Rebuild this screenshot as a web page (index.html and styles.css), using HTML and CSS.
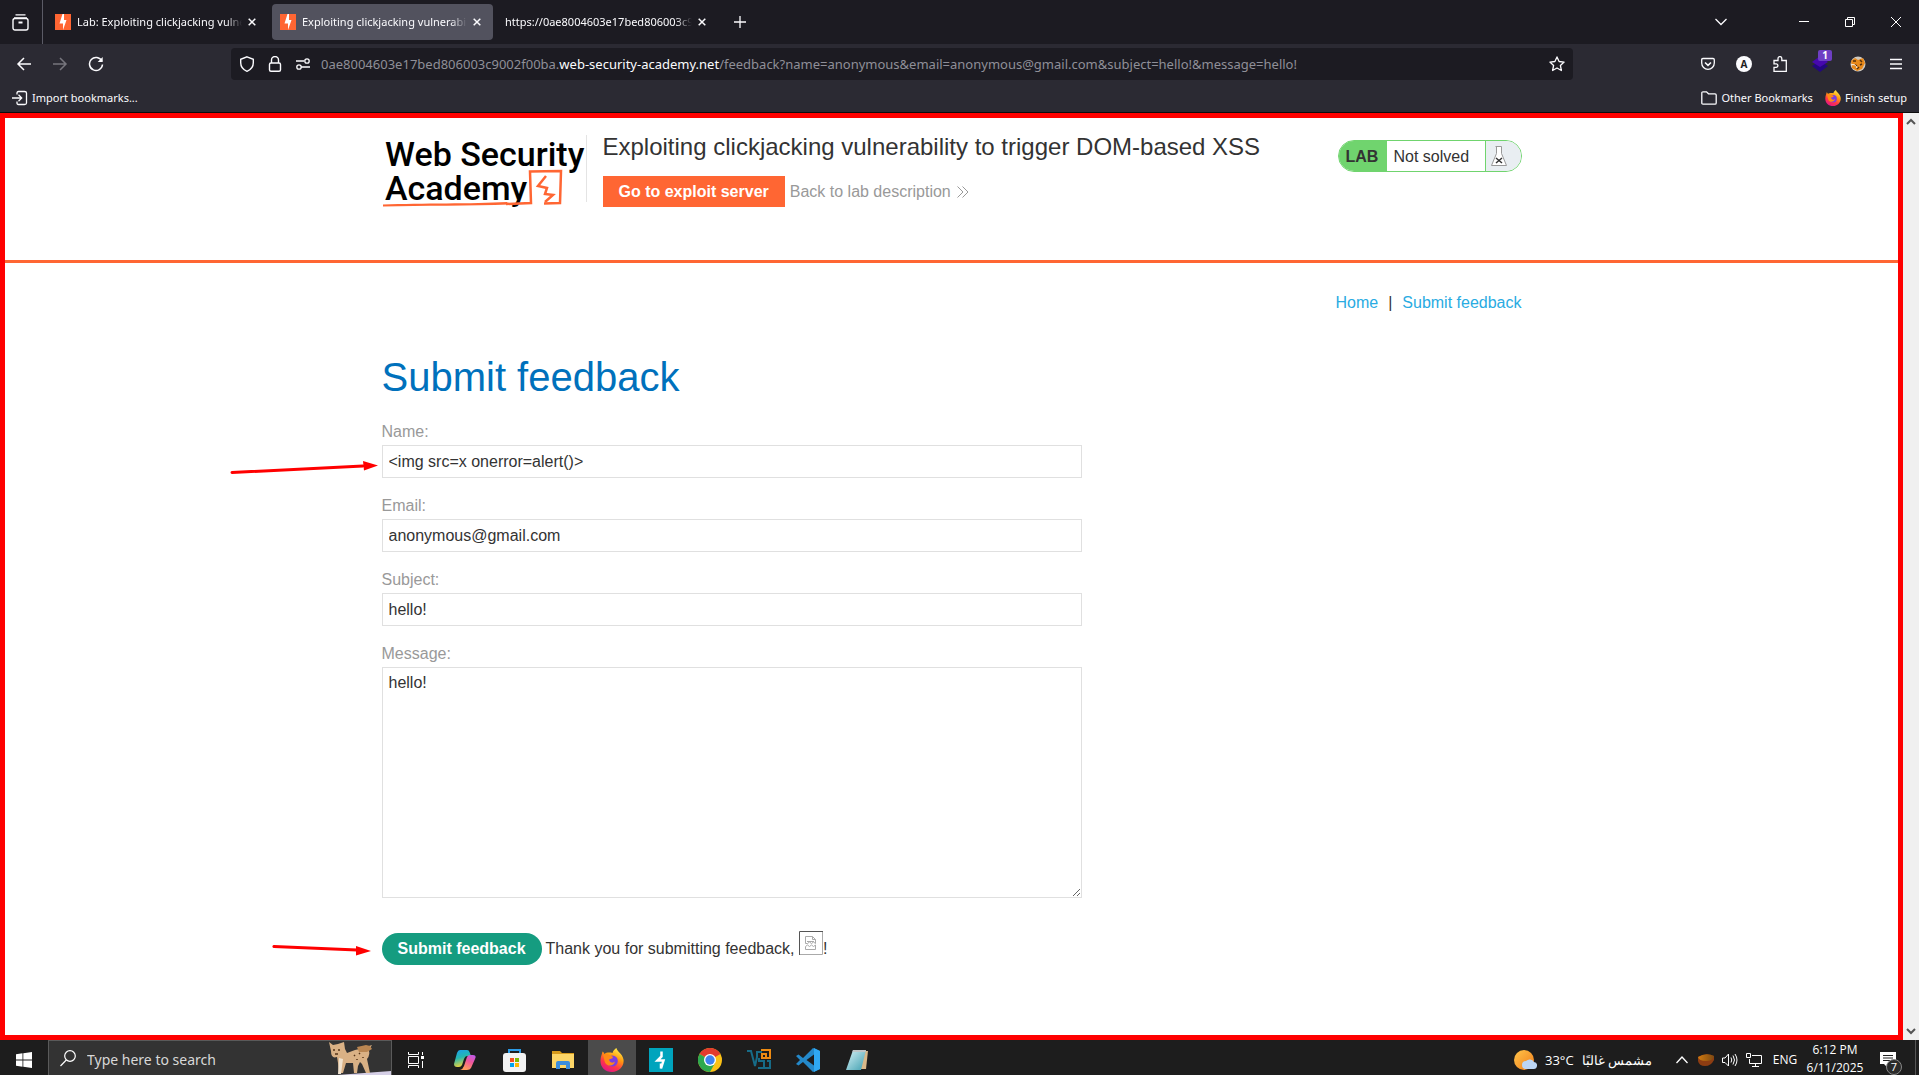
FILE: index.html
```html
<!DOCTYPE html>
<html lang="en">
<head>
<meta charset="utf-8">
<title>Exploiting clickjacking vulnerability to trigger DOM-based XSS</title>
<link rel="stylesheet" href="styles.css">
</head>
<body>
<svg class="defs" aria-hidden="true">
  <defs>
    <linearGradient id="flame" x1="0.8" y1="0" x2="0.3" y2="1"><stop offset="0" stop-color="#fff44f"/><stop offset=".4" stop-color="#ff980e"/><stop offset=".7" stop-color="#ff3647"/><stop offset="1" stop-color="#e31587"/></linearGradient>
    <linearGradient id="copA" x1="0" y1="0" x2="0.3" y2="1"><stop offset="0" stop-color="#1b9df0"/><stop offset=".5" stop-color="#25b7b0"/><stop offset="1" stop-color="#e8d13c"/></linearGradient>
    <linearGradient id="copB" x1="1" y1="0" x2="0.5" y2="1"><stop offset="0" stop-color="#b65cf5"/><stop offset=".5" stop-color="#f0569c"/><stop offset="1" stop-color="#ff9a5c"/></linearGradient>
    <linearGradient id="sun" x1="0" y1="0" x2="1" y2="1"><stop offset="0" stop-color="#ffc44a"/><stop offset="1" stop-color="#f07d1a"/></linearGradient>
    <linearGradient id="pad" x1="0" y1="0" x2="1" y2="1"><stop offset="0" stop-color="#d8f3f7"/><stop offset="1" stop-color="#3f9fb0"/></linearGradient>
    <linearGradient id="bowl" x1="0" y1="0" x2="1" y2="0"><stop offset="0" stop-color="#d07a10"/><stop offset="1" stop-color="#7d4a12"/></linearGradient>
    <symbol id="burp" viewBox="0 0 16 16"><rect width="16" height="16" fill="#f63"/><path d="M9 0v6h2.500L8 16V9.500H4.500L7.500 0z" fill="#fff"/></symbol>
    <symbol id="firefox" viewBox="0 0 24 24"><path d="M12.500 5C13 2.500 15 1 16.500 0c0 3 6 5.500 7 11.500C24.500 18 19 24 12 24S0 19 .5 12C.700 8.500 2 6.500 2.500 3.500 3.500 4 4 5 4.500 6 6 4.500 9.500 4.300 12.500 5z" fill="url(#flame)"/><circle cx="12.300" cy="13" r="5.500" fill="#7a3fe0"/><path d="M3 7c3.500-2 6 .5 9.500 1.500 1 1.500-.5 2.500-3 2.500-1 3 3 5 5.500 2.500-1 5-8 5.500-10 1C4 12 4 9 3 7z" fill="#ff8a16"/></symbol>
    <symbol id="close" viewBox="0 0 8 8"><path d="M.7.7l6.600 6.600M7.300.7L.7 7.300" fill="none" stroke="#fbfbfe" stroke-width="1.500"/></symbol>
  </defs>
</svg>

<header class="browser">
  <div class="tabstrip">
    <button class="view" aria-label="Firefox View"><svg width="17" height="17" viewBox="0 0 17 17" fill="none" stroke="#fbfbfe" stroke-width="1.400"><path d="M3.500.9h10M2 3.900h13"/><rect x="1" y="4.500" width="15" height="11.500" rx="2"/><path d="M6.500 8.500h4" stroke-width="2"/></svg></button>
    <nav class="tabs" aria-label="Tabs">
      <div class="tab"><svg width="16" height="16"><use href="#burp"/></svg><span class="tab-title">Lab: Exploiting clickjacking vulnerability</span><button aria-label="Close tab"><svg width="8" height="8"><use href="#close"/></svg></button></div>
      <div class="tab active"><svg width="16" height="16"><use href="#burp"/></svg><span class="tab-title">Exploiting clickjacking vulnerability</span><button aria-label="Close tab"><svg width="8" height="8"><use href="#close"/></svg></button></div>
      <div class="tab"><span class="tab-title">https://0ae8004603e17bed806003c9002f00ba</span><button aria-label="Close tab"><svg width="8" height="8"><use href="#close"/></svg></button></div>
    </nav>
    <button class="newtab" aria-label="New tab"><svg width="12" height="12" viewBox="0 0 12 12" stroke="#fbfbfe" stroke-width="1.300"><path d="M6 0v12M0 6h12"/></svg></button>
    <div class="window-controls">
      <button class="alltabs" aria-label="List all tabs"><svg width="12" height="8" viewBox="0 0 12 8" fill="none" stroke="#fbfbfe" stroke-width="1.300"><path d="M.5 1L6 6.500 11.500 1"/></svg></button>
      <button aria-label="Minimize"><svg width="10" height="10" viewBox="0 0 10 10" stroke="#fff"><path d="M0 4.500h10"/></svg></button>
      <button aria-label="Restore"><svg width="10" height="10" viewBox="0 0 10 10" fill="none" stroke="#fff"><path d="M.5 2.500h7v7h-7zM2.500 2.500v-2h7v7h-2"/></svg></button>
      <button aria-label="Close"><svg width="10" height="10" viewBox="0 0 10 10" stroke="#fff"><path d="M0 0l10 10M10 0L0 10"/></svg></button>
    </div>
  </div>

  <div class="toolbar">
    <div class="nav-buttons">
      <button aria-label="Back"><svg width="16" height="16" viewBox="0 0 16 16" fill="none" stroke="#fbfbfe" stroke-width="1.500"><path d="M15 8H2M8 2L2 8l6 6"/></svg></button>
      <button aria-label="Forward"><svg width="16" height="16" viewBox="0 0 16 16" fill="none" stroke="#77767e" stroke-width="1.500"><path d="M1 8h13M8 2l6 6-6 6"/></svg></button>
      <button aria-label="Reload"><svg width="16" height="16" viewBox="0 0 16 16" fill="none" stroke="#fbfbfe" stroke-width="1.500"><path d="M13.800 5A6.500 6.500 0 1 0 14.500 8.500"/><path d="M14.700 1v5H9.700z" fill="#fbfbfe" stroke="none"/></svg></button>
    </div>
    <div class="urlbar">
      <button aria-label="Tracking protection"><svg width="16" height="16" viewBox="0 0 16 16" fill="none" stroke="#fbfbfe" stroke-width="1.400"><path d="M8 .8l6.300 2.500v3.500c0 4-2.500 7-6.300 8.500C4.200 13.800 1.700 10.800 1.700 6.800V3.300z"/></svg></button>
      <button aria-label="Site information"><svg width="16" height="16" viewBox="0 0 16 16" fill="none" stroke="#fbfbfe" stroke-width="1.400"><rect x="2.500" y="7" width="11" height="8.300" rx="1.500"/><path d="M4.500 7V4a3.500 3.500 0 0 1 7 0v3"/></svg></button>
      <button aria-label="Permissions"><svg width="16" height="16" viewBox="0 0 16 16" fill="none" stroke="#fbfbfe" stroke-width="1.300"><path d="M1 5h8M6 11h9"/><circle cx="12" cy="5" r="2.200"/><circle cx="4" cy="11" r="2.200"/></svg></button>
      <div class="url" role="textbox" aria-label="Address" contenteditable="true" spellcheck="false">0ae8004603e17bed806003c9002f00ba.<b>web-security-academy.net</b>/feedback?name=anonymous&amp;email=anonymous@gmail.com&amp;subject=hello!&amp;message=hello!</div>
      <button aria-label="Bookmark this page"><svg width="16" height="16" viewBox="0 0 16 16" fill="none" stroke="#fbfbfe" stroke-width="1.300" stroke-linejoin="round"><path d="M8 .9l2.100 4.600 5 .6-3.700 3.400 1 5L8 12l-4.400 2.500 1-5L.9 6.100l5-.6z"/></svg></button>
    </div>
    <div class="extensions">
      <button aria-label="Save to Pocket"><svg width="14" height="14" viewBox="0 0 14 14" fill="none" stroke="#fbfbfe" stroke-width="1.300"><path d="M2 1.500h10q1.300 0 1.300 1.300V6A6.300 6.300 0 0 1 .7 6V2.800Q.7 1.500 2 1.500z"/><path d="M4 5.500l3 2.800 3-2.800" stroke-width="1.600"/></svg></button>
      <button aria-label="Account"><span class="account">A</span></button>
      <button aria-label="Extensions"><svg width="16" height="16" viewBox="0 0 16 16" fill="none" stroke="#fbfbfe" stroke-width="1.300"><path d="M2 15.300v-4h2.200a1.700 1.700 0 1 0 0-3.400H2V4.500h4V2.500a1.900 1.900 0 0 1 3.800 0v2h4.500v10.800z"/></svg></button>
      <button class="layers" aria-label="Wappalyzer, 1 item"><svg width="16" height="16" viewBox="0 0 16 16"><path d="M0 10l8-5 8 5-8 6z" fill="#23077f"/><path d="M0 6l8-6 8 6-8 5z" fill="#4608ad"/></svg><span class="count">1</span></button>
      <button aria-label="FoxyProxy"><svg width="16" height="16" viewBox="0 0 16 16"><circle cx="8" cy="8" r="7.500" fill="#cfc9c0"/><path d="M1 5l4-3 3 2 5-2 2 5-3 6-5 2-5-3z" fill="#e8891a"/><path d="M3 5h3M10 4l2 2M5 9l2 1M10 9l2-1M7 13l2-2" stroke="#54300c" stroke-width="1.500"/><path d="M1 9c3-1 5 0 6 3" stroke="#fff" fill="none"/></svg></button>
      <button aria-label="Menu"><svg width="12" height="12" viewBox="0 0 12 12" stroke="#fbfbfe" stroke-width="1.300"><path d="M0 1.500h12M0 6h12M0 10.500h12"/></svg></button>
    </div>
  </div>

  <div class="bookmarks">
    <button><svg width="16" height="16" viewBox="0 0 16 16" fill="none" stroke="#fbfbfe" stroke-width="1.300"><path d="M5 4.500V3q0-1.500 1.500-1.500h6Q14.500 1.500 14.500 3v10q0 1.500-2 1.500h-6Q5 14.500 5 13v-1.500M0 8h9.500M6.500 4.800L9.700 8l-3.200 3.200"/></svg>Import bookmarks...</button>
    <div class="bookmarks-end">
      <button><svg width="16" height="14" viewBox="0 0 16 14" fill="none" stroke="#fbfbfe" stroke-width="1.300"><path d="M.8 12V2Q.8.8 2 .8h3.500l2 2H14q1.200 0 1.200 1.200v8q0 1.200-1.200 1.200H2Q.8 13.200.8 12z"/></svg>Other Bookmarks</button>
      <button><svg width="16" height="16"><use href="#firefox"/></svg>Finish setup</button>
    </div>
  </div>
</header>

<div class="viewport">
  <div class="page">
    <header class="lab-header">
      <div class="container lab-row">
        <a class="logo" href="#"><svg width="204" height="74" viewBox="0 0 204 74" role="img" aria-label="Web Security Academy"><text x="3" y="31">Web Security</text><text x="3" y="65">Academy</text><path d="M1 69.500C40 68 90 69 125 67l2 2.500C90 71 40 70.500 1 71.500z" fill="#f63"/><path d="M124 69l25-1-1-31.500 31-.5-1 32-16 .5" fill="none" stroke="#f63" stroke-width="2.500"/><path d="M164 41l-8 10 9 2-2 6 8 1-8 7" fill="none" stroke="#f63" stroke-width="2.500"/></svg></a>
        <div class="lab-title">
          <h2>Exploiting clickjacking vulnerability to trigger DOM-based XSS</h2>
          <div class="lab-links">
            <a class="exploit" href="#">Go to exploit server</a>
            <a class="back" href="#">Back to lab description <svg width="12" height="12" viewBox="0 0 12 12" fill="none" stroke="#999"><path d="M.5.5L6 6 .5 11.500M5.500.5L11 6l-5.500 5.500"/></svg></a>
          </div>
        </div>
        <div class="status"><strong>LAB</strong><span class="state">Not solved</span><span class="flask"><svg width="16" height="20" viewBox="0 0 16 20" fill="none" stroke="#999"><path d="M4.500.5h6M5.500.5v7L.5 19.500h15l-5-12v-7" fill="#fff"/><path d="M5 12l6 5M11 12l-6 5" stroke="#333" stroke-width="1.500"/></svg></span></div>
      </div>
    </header>

    <main class="container">
      <nav class="links"><a href="#">Home</a><span>|</span><a href="#">Submit feedback</a></nav>
      <h1>Submit feedback</h1>
      <form>
        <label for="name">Name:</label>
        <input id="name" type="text" value="&lt;img src=x onerror=alert()&gt;">
        <label for="email">Email:</label>
        <input id="email" type="email" value="anonymous@gmail.com">
        <label for="subject">Subject:</label>
        <input id="subject" type="text" value="hello!">
        <label for="message">Message:</label>
        <textarea id="message" rows="12">hello!</textarea>
        <div class="submit-row">
          <button type="button">Submit feedback</button>
          <span class="thanks">Thank you for submitting feedback, <svg class="broken" width="24" height="24" viewBox="0 0 24 24" fill="none"><path d="M.5 24V.5H24" stroke="#555"/><path d="M23.500 1v22.500H1" stroke="#aaa"/><path d="M6.500 12.500v-7h7l3 3v4l-2-1.500-2 1.500-2-1.500-2 1.500zM13.500 5.500v3h3M6.500 18.500v-3l2-1.500 2 1.500 2-1.500 2 1.500 2-1.500v4.500zM8 10.500h7" stroke="#aaa"/></svg>!</span>
        </div>
      </form>
    </main>
    <svg class="arrow arrow-name" width="148" height="14" viewBox="0 0 148 14"><path d="M2 11.500L133 5" stroke="red" stroke-width="3" stroke-linecap="round"/><path d="M133 0l15 4.500-14 5z" fill="red"/></svg>
    <svg class="arrow arrow-submit" width="100" height="14" viewBox="0 0 100 14"><path d="M2 4.500L85 8" stroke="red" stroke-width="3" stroke-linecap="round"/><path d="M84 4l15 5-15 4.500z" fill="red"/></svg>
  </div>
  <div class="scrollbar" aria-hidden="true"><svg width="10" height="7" viewBox="0 0 10 7" fill="none" stroke="#555" stroke-width="2"><path d="M1 6l4-4 4 4"/></svg><svg width="10" height="7" viewBox="0 0 10 7" fill="none" stroke="#555" stroke-width="2"><path d="M1 1l4 4 4-4"/></svg></div>
</div>

<footer class="taskbar">
  <button class="start" aria-label="Start"><svg width="16" height="16" viewBox="0 0 16 16" fill="#fff"><path d="M0 2.300L6.500 1.300V7.600H0zM7.300 1.200L16 0v7.600H7.300zM0 8.400h6.500v6.300L0 13.700zM7.300 8.400H16V16l-8.700-1.200z"/></svg></button>
  <div class="search">
    <svg width="16" height="17" viewBox="0 0 16 17" fill="none" stroke="#fff" stroke-width="1.200"><circle cx="10" cy="6" r="5.300"/><path d="M6.300 10L.5 16"/></svg>
    <input type="text" aria-label="Search" placeholder="Type here to search">
    <svg class="lynx" width="62" height="34" viewBox="0 0 62 34"><path d="M8 34l54-4v4z" fill="#d5cfe6"/><path d="M0 1l4 3 5-1 6-2 1 7 2 4 8-3 9-2 5-2 3-1q-1 3-4 4 3 5-1 10l3 14h-4l-4-9-2-2-2 4-1 7h-3l-1-10-7 0-3 10h-4l-1-10-1-6Q2 18 2 10z" fill="#d9b185"/><path d="M28 6l9-2 4 1 2 3-5 3-8 0z" fill="#b98652"/><path d="M10 17l4 1-2 15H9z" fill="#f1e3cf"/><path d="M4 9h2M9 9h2M6 13h3M25 14l1 1M30 12l1 1M34 16v1M28 18v1" stroke="#553418" stroke-width="1.500"/></svg>
  </div>
  <nav class="apps" aria-label="Apps">
    <button aria-label="Task view"><svg width="16" height="16" viewBox="0 0 16 16" fill="none" stroke="#fff"><path d="M.5 0v2.500h10V0M.5 16v-2.500h10V16M.5 4.500h10v7H.5zM14.500 0v3M14.500 9v7"/><path d="M13 4h3v3h-3z" fill="#fff" stroke="none"/></svg></button>
    <button aria-label="Copilot"><svg width="22" height="20" viewBox="0 0 22 20"><path d="M6 0h7q2 0 2.500 2L17 6h-4q-2 0-3 3l-2 6q-1 2-3 2H3q-3 0-3-3L3 3q1-3 3-3z" fill="url(#copA)"/><path d="M19 5h-3q-2 0-3 2l-3 9q-1 3-4 4h7q3 0 4-2l4-9q2-4-2-4z" fill="url(#copB)"/></svg></button>
    <button aria-label="Store"><svg width="23" height="23" viewBox="0 0 23 23"><path d="M6 6V1h11v5" fill="none" stroke="#2b9be6" stroke-width="2"/><rect y="4" width="23" height="19" rx="3" fill="#f2f2f2"/><path d="M7 9h4v4H7z" fill="#f25022"/><path d="M12 9h4v4h-4z" fill="#7fba00"/><path d="M7 14h4v4H7z" fill="#00a4ef"/><path d="M12 14h4v4h-4z" fill="#ffb900"/></svg></button>
    <button aria-label="File Explorer"><svg width="22" height="20" viewBox="0 0 22 20"><path d="M0 1h8l2 2h12v5H0z" fill="#d79b1c"/><path d="M0 4h22v14H0z" fill="#fdd667"/><path d="M4 18v-5q0-2 2-2h10q2 0 2 2v6h-4v-4H8v4H4z" fill="#3b8ede"/></svg></button>
    <button class="running" aria-label="Firefox"><svg width="24" height="24"><use href="#firefox"/></svg></button>
    <button aria-label="Burp Suite"><svg width="24" height="24" viewBox="0 0 24 24"><rect width="24" height="24" fill="#00a4bd"/><path d="M12.500 3.500v5l-4 4 6 0-2.500 8v-5" fill="none" stroke="#fff" stroke-width="2.500"/></svg></button>
    <button aria-label="Chrome"><svg width="24" height="24" viewBox="0 0 24 24"><circle cx="12" cy="12" r="12" fill="#fbc116"/><path d="M12 12L1.600 6A12 12 0 0 1 22.400 6z" fill="#e33b2e"/><path d="M12 12L1.600 6A12 12 0 0 0 12 24l5-9z" fill="#2da94f"/><circle cx="12" cy="12" r="6" fill="#fff"/><circle cx="12" cy="12" r="4.700" fill="#3f83f0"/></svg></button>
    <button aria-label="VMware"><svg width="24" height="22" viewBox="0 0 24 22" fill="none" stroke-width="2"><path d="M0 2h4l4 15 2-9V3h5M12 9v3h5v7h-6M20 12h3v7h-5" stroke="#176b87"/><path d="M14 1h9v8h-8V5h4v4" stroke="#ee8b12"/></svg></button>
    <button aria-label="VS Code"><svg width="24" height="24" viewBox="0 0 24 24"><path d="M17 0l7 3v18l-7 3L7 14l-4.500 3.500L0 16l4-4-4-4 2.500-1.500L7 10zM18 6.500L10.500 12l7.500 5.500z" fill="#2489ca" fill-rule="evenodd"/><path d="M18 0l6 3v18l-6 3z" fill="#2fa8f2"/></svg></button>
    <button aria-label="Notepad"><svg width="22" height="22" viewBox="0 0 22 22"><path d="M18 2h4l-2 18H4z" fill="#d9b98a"/><path d="M7 1h13l-5 20H0z" fill="url(#pad)"/><path d="M7 1h13l-.5 2h-13z" fill="#bfc6c8"/></svg></button>
  </nav>
  <div class="tray">
    <button class="weather"><svg width="23" height="20" viewBox="0 0 23 20"><circle cx="10" cy="10" r="10" fill="url(#sun)"/><path d="M12 19a4 4 0 0 1 0-8 5 5 0 0 1 8 1 3.500 3.500 0 0 1-1 7z" fill="#bcd6f5"/></svg><span>33°C</span><span dir="rtl" lang="ar">مشمس غالبًا</span></button>
    <div class="tray-icons">
      <button aria-label="Show hidden icons"><svg width="12" height="8" viewBox="0 0 12 8" fill="none" stroke="#fff" stroke-width="1.300"><path d="M.5 7L6 1l5.500 6"/></svg></button>
      <button aria-label="Tray app"><svg width="16" height="12" viewBox="0 0 16 12"><path d="M0 3q8-5 16-1v4q-3 6-9 6T0 7z" fill="#8d3d12"/><path d="M0 3q8-5 16-1-1 5-8 5T0 3z" fill="url(#bowl)"/></svg></button>
      <button aria-label="Volume"><svg width="16" height="14" viewBox="0 0 16 14" fill="none" stroke="#fff"><path d="M.5 5v4.500H3L6.500 13V1L3 5zM9 4.500q1.500 2.500 0 5M11 2.500q3 4.500 0 9M13 1q4 6 0 12"/></svg></button>
      <button aria-label="Network"><svg width="16" height="14" viewBox="0 0 16 14" fill="none" stroke="#fff"><path d="M6 2.500h9.500v8H3.500V6M9.500 10.500V13M6 13.500h7M.5.5h4v4h-4z"/></svg></button>
      <button class="lang">ENG</button>
    </div>
    <button class="clock"><span>6:12 PM</span><span>6/11/2025</span></button>
    <button class="notify" aria-label="7 notifications"><svg width="16" height="16" viewBox="0 0 16 16"><path d="M0 0h16v12H7v3l-3-3H0z" fill="#fff"/><path d="M3 3.500h10M3 6h10M3 8.500h7" stroke="#222"/></svg><span class="badge">7</span></button>
  </div>
</footer>
</body>
</html>
```
FILE: styles.css
```css
* { box-sizing: border-box; }
body {
  margin: 0;
  min-height: 100vh;
  display: flex;
  flex-direction: column;
  background: #fff;
  color: #333;
  font: 16px/20px "Liberation Sans", Arial, sans-serif;
}
button { border: 0; padding: 0; background: none; color: inherit; font: inherit; }
svg { display: block; flex: none; }
a { text-decoration: none; }
.defs { position: absolute; width: 0; height: 0; }

/* Browser chrome */
.browser {
  background: #2b2a33;
  color: #fbfbfe;
  font: 11px/16px "Noto Sans", "Open Sans", sans-serif;
  border-bottom: 1px solid #0c0c0d;
}
.browser button, .taskbar button { display: flex; align-items: center; justify-content: center; }
.tabstrip { display: flex; height: 44px; background: #1c1b22; }
.view { width: 43px; padding-right: 2px; border-right: 1px solid #5b5b66; }
.tabs { display: flex; align-items: center; gap: 4px; padding-left: 4px; }
.tab {
  display: flex;
  align-items: center;
  width: 221px;
  height: 36px;
  padding: 0 6px 0 8px;
  gap: 6px;
  border-radius: 4px;
}
.tab.active { background: #52525e; }
.tab-title {
  flex: 1;
  overflow: hidden;
  white-space: nowrap;
  mask-image: linear-gradient(to left, transparent, #000 16px);
}
.tab button { width: 20px; height: 20px; margin-left: -6px; }
.newtab { width: 40px; margin-left: 2px; }
.window-controls { display: flex; margin-left: auto; }
.window-controls button { width: 46px; }
.window-controls .alltabs { margin-right: 37px; }

.toolbar { display: flex; align-items: center; height: 40px; }
.nav-buttons { display: flex; padding-left: 6px; }
.nav-buttons button { width: 36px; height: 32px; }
.urlbar {
  flex: 1;
  display: flex;
  align-items: center;
  height: 32px;
  margin: 0 117px;
  padding: 0 2px;
  border-radius: 4px;
  background: #1c1b22;
}
.urlbar button { width: 28px; height: 28px; }
.url {
  flex: 1;
  padding-left: 4px;
  color: #8f8f98;
  font-size: 13px;
  white-space: nowrap;
  overflow: hidden;
}
.url b { color: #fbfbfe; font-weight: 400; }
.extensions { display: flex; align-items: center; padding-right: 4px; }
.extensions button { width: 36px; height: 32px; }
.extensions button:nth-child(3) { margin-right: 3px; }
.extensions button:nth-child(n+4) { width: 38px; }
.account {
  width: 16px;
  height: 16px;
  border-radius: 50%;
  background: #fbfbfe;
  color: #1c1b22;
  font-weight: 700;
  font-size: 10px;
}
.layers { position: relative; }
.count {
  position: absolute;
  top: 2px;
  right: 7px;
  width: 14px;
  height: 11px;
  border-radius: 2px;
  background: #6e3fc4;
  color: #fff;
  font: 700 10px/11px "Open Sans", sans-serif;
}

.bookmarks {
  display: flex;
  justify-content: space-between;
  align-items: center;
  height: 28px;
  padding: 0 12px;
}
.browser .bookmarks button { gap: 4px; }
.bookmarks-end { display: flex; gap: 12px; }

/* Page */
.viewport { flex: 1; display: flex; }
.page { flex: 1; position: relative; min-width: 0; background: #fff; }
.page::after {
  content: "";
  position: absolute;
  inset: 0;
  border: 5px solid #f00;
  pointer-events: none;
}
.scrollbar {
  width: 16px;
  display: flex;
  flex-direction: column;
  align-items: center;
  justify-content: space-between;
  padding: 5px 0;
  background: #f0f0f0;
}
.container { width: 100%; max-width: 1140px; margin: 0 auto; }
.lab-header { border-bottom: 3px solid #f63; }
.lab-row { display: flex; align-items: flex-start; height: 147px; padding-top: 22px; }
.logo {
  width: 205px;
  height: 67px;
  border-right: 1px solid #e4e4e4;
}
.logo text { font: 500 34px "Roboto", sans-serif; fill: #000; }
.lab-title { margin-left: 16px; }
h2 { margin: 0; font-size: 24px; line-height: 24px; font-weight: 400; }
.lab-links { display: flex; align-items: center; gap: 5px; margin-top: 17px; }
.exploit {
  padding: 6px 16px 5px;
  background: #f63;
  color: #fff;
  font-weight: 700;
}
.back { display: flex; align-items: center; gap: 6px; color: #999; }
.status {
  display: flex;
  align-items: stretch;
  width: 184px;
  height: 32px;
  margin: 5px 0 0 auto;
  border: 1px solid #70d46e;
  border-radius: 16px;
  overflow: hidden;
  line-height: 32px;
}
.status strong { width: 48px; padding-left: 7px; background: #70d46e; }
.state { flex: 1; padding-left: 7px; }
.flask {
  display: flex;
  align-items: center;
  width: 36px;
  padding-left: 5px;
  border-left: 1px solid #70d46e;
  background: #e9eef2;
}
.links { display: flex; justify-content: flex-end; gap: 10px; padding-top: 30px; }
.links a { color: #29abe2; }
h1 { margin: 42px 0 23px; font-size: 40px; line-height: 44px; font-weight: 400; color: #0071bc; }
form { width: 700px; max-width: 100%; }
label { display: block; color: #999; line-height: 20px; margin-bottom: 3px; }
form input, textarea {
  display: block;
  width: 100%;
  height: 33px;
  margin: 0 0 18px;
  padding: 5px 6px;
  border: 1px solid #e0e0e0;
  color: #333;
  font: inherit;
}
textarea { height: 231px; margin-bottom: 35px; resize: vertical; }
.submit-row { display: flex; align-items: center; gap: 4px; height: 32px; }
.submit-row button {
  height: 32px;
  padding: 0 16px;
  border-radius: 16px;
  background: #159c80;
  color: #fff;
  font-weight: 700;
}
.thanks { display: flex; align-items: center; white-space: pre; }
.broken { margin-bottom: 12px; }
.arrow { position: absolute; }
.arrow-name { left: 230px; top: 348px; }
.arrow-submit { left: 272px; top: 829px; }

/* Taskbar */
.taskbar {
  display: flex;
  height: 35px;
  background: #1d1d1d;
  color: #fff;
  font: 12px/18px "Open Sans", "Noto Sans", sans-serif;
}
.taskbar .start { width: 48px; padding-top: 5px; }
.search {
  display: flex;
  align-items: center;
  width: 344px;
  padding-left: 11px;
  border: 1px solid #5a5a5a;
  border-bottom: 0;
  background: #333;
}
.search input {
  flex: 1;
  min-width: 0;
  padding: 4px 11px 0;
  border: 0;
  background: none;
  color: #fff;
  font: 14px/20px "Noto Sans", "Open Sans", sans-serif;
}
.search input::placeholder { color: #d8d8d8; opacity: 1; }
.apps { display: flex; gap: 1px; }
.apps button { width: 48px; padding-top: 5px; }
.apps .running { background: #4b4b4b; }
.tray { display: flex; margin-left: auto; padding-right: 3px; }
.tray button { padding-top: 4px; }
.taskbar .weather { gap: 8px; margin-right: 18px; font-size: 13px; }
.tray-icons { display: flex; }
.tray-icons button { width: 24px; }
.tray-icons .lang { width: 38px; }
.taskbar .clock { flex-direction: column; width: 62px; padding: 2px 0 0; }
.taskbar .notify { position: relative; width: 50px; padding-right: 6px; border-right: 1px solid #555; }
.badge {
  position: absolute;
  right: 13px;
  bottom: 0;
  width: 16px;
  height: 16px;
  border: 1px solid #888;
  border-radius: 50%;
  background: #2b2b2b;
  font-size: 11px;
  line-height: 14px;
}
```
